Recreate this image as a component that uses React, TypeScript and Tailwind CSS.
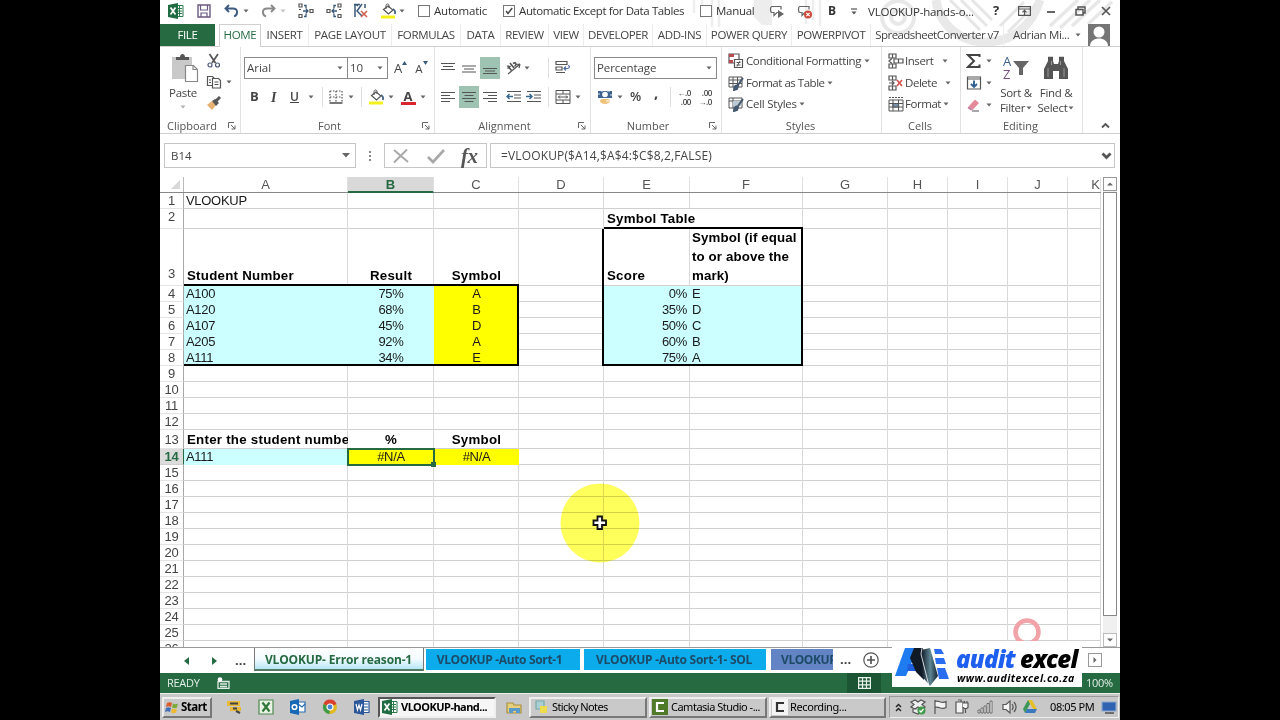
import type { ReactNode } from 'react';
import { clsx } from 'clsx';

const UI = "font-['Open_Sans','Noto_Sans',sans-serif]";

/* ---------- small shared pieces ---------- */

function Caret({ className }: { className?: string }) {
  return (
    <svg className={clsx('shrink-0', className)} width="6" height="4" viewBox="0 0 6 4">
      <path d="M0.5 0.5h5L3 3.5z" fill="#666" />
    </svg>
  );
}

function Icon({ w = 16, h = 16, children, className }: { w?: number; h?: number; children: ReactNode; className?: string }) {
  return (
    <svg className={clsx('shrink-0', className)} width={w} height={h} viewBox={`0 0 ${w} ${h}`} fill="none" stroke="#555" strokeWidth="1.2">
      {children}
    </svg>
  );
}

function Checkbox({ checked }: { checked?: boolean }) {
  return (
    <div className="flex h-3 w-3 shrink-0 items-center justify-center border border-[#777] bg-white">
      {checked && (
        <Icon w={8} h={8}>
          <path d="M1 4l2 2.500L7.200 1" stroke="#444" strokeWidth="1.400" />
        </Icon>
      )}
    </div>
  );
}

function ExcelIcon() {
  return (
    <Icon>
      <path d="M8 2.500h7v11H8z" fill="#fff" stroke="#2b7a4b" strokeWidth="1" />
      <path d="M9 5.500h5M9 8h5M9 10.500h5M11.500 3v10" stroke="#2b7a4b" strokeWidth="1" />
      <path d="M0 2l10-2v16L0 14z" fill="#1f6b42" stroke="none" />
      <path d="M2.500 4.500l5 7M7.500 4.500l-5 7" stroke="#fff" strokeWidth="1.700" />
    </Icon>
  );
}

function BucketIcon({ className }: { className?: string }) {
  return (
    <Icon w={17} h={16} className={className}>
      <path d="M3.500 6.500l4.500-3.500 5 4-4.500 4z" fill="#fff" />
      <path d="M6 6V2.500c0-2 3-2 3 0V5" strokeWidth="1" />
      <path d="M13 6c2 1 2.500 3 1.800 5" stroke="#4a6484" strokeWidth="1.800" />
      <path d="M1 12.500h14v3H1z" fill="#f4f01c" stroke="none" />
    </Icon>
  );
}

/* ---------- title bar ---------- */

function UndoIcon({ flip }: { flip?: boolean }) {
  return (
    <Icon w={15} h={14} className={flip ? '-scale-x-100' : ''}>
      <path d="M5 1L1.500 4.500 5 8M2 4.500h7c5 0 5.500 6 1 8" stroke={flip ? '#8a8a8a' : '#3f5a80'} strokeWidth="1.900" />
    </Icon>
  );
}

function TraceIcon({ kind }: { kind: 'from' | 'to' | 'clear' }) {
  if (kind === 'clear') {
    return (
      <Icon>
        <path d="M1 1.500h6M2 1v13M5 3l-3-2M9 1l-5 7 5 5M12 1v4" stroke="#3a5a7a" strokeWidth="1.500" />
        <path d="M8 8l6 6M14 8l-6 6" stroke="#d06050" strokeWidth="1.600" />
      </Icon>
    );
  }
  return (
    <Icon className={kind === 'to' ? '-scale-x-100' : ''}>
      <path d="M1 1h3v3H1zM1 11.500h3v3H1zM12 6.500h3v3h-3zM1 6.500h2" />
      <path d="M6 2.500h2v3M6 13.500h2v-3M5 8h5M8 6l2 2-2 2" stroke="#3a5a7a" strokeWidth="1.300" />
    </Icon>
  );
}

function TitleBar() {
  return (
    <div className="relative flex h-[22px] shrink-0 items-center text-[11.500px] text-[#333]">
      <div className="ml-2 w-[29px]"><ExcelIcon /></div>
      <div className="w-[27px]">
        <Icon w={14} h={14}>
          <path d="M1 1h12v12H1z" stroke="#6a5a80" strokeWidth="1.400" />
          <path d="M3.500 1v5h7V1M4 13V9h6v4" stroke="#6a5a80" />
        </Icon>
      </div>
      <div className="flex w-[37px] items-center gap-1"><UndoIcon /><Caret /></div>
      <div className="flex w-[37px] items-center gap-1"><UndoIcon flip /><Caret className="opacity-40" /></div>
      <div className="w-7"><TraceIcon kind="from" /></div>
      <div className="w-[27px]"><TraceIcon kind="to" /></div>
      <div className="w-[27px]"><TraceIcon kind="clear" /></div>
      <div className="flex w-[38px] items-center gap-0.5"><BucketIcon /><Caret /></div>
      <div className="flex w-[85px] items-center gap-1 tracking-[-0.200px]"><Checkbox />Automatic</div>
      <div className="flex w-[197px] items-center gap-1 whitespace-nowrap tracking-[-0.390px]"><Checkbox checked />Automatic Except for Data Tables</div>
      <div className="flex w-[69px] items-center gap-1 tracking-[-0.300px]"><Checkbox />Manual</div>
      <div className="w-7">
        <Icon>
          <path d="M3 3.500c-2 0-2 6 0 6h2v3l3-3h2M3 3.500h9v3" stroke="#666" />
          <path d="M9 7l6 4-6 4z" fill="#666" stroke="none" />
        </Icon>
      </div>
      <div className="w-[31px]">
        <Icon>
          <path d="M3 3.500c-2 0-2 6 0 6h2v3l3-3M3 3.500h9v3" stroke="#666" />
          <circle cx="11" cy="11.500" r="4" fill="#cf4a3c" stroke="none" />
          <path d="M9.300 9.800l3.400 3.400M12.700 9.800l-3.400 3.400" stroke="#fff" />
        </Icon>
      </div>
      <div className="w-[23px] text-[12px] font-bold">B</div>
      <div className="w-[17px]">
        <Icon w={6} h={7}><path d="M0 1h6" /><path d="M0.500 3.500h5L3 6.500z" fill="#555" stroke="none" /></Icon>
      </div>
      <div className="w-[125px] whitespace-nowrap pt-0.5 text-[11.500px] tracking-[-0.200px]">VLOOKUP-hands-o...</div>
      <div className="w-[25px] text-[13px] font-bold">?</div>
      <div className="w-7">
        <Icon w={13} h={10}><path d="M0.600 0.600h11.800v8.800H0.600zM0.600 3h11.800M6.500 9V4.500M4.500 6.300l2-2 2 2" /></Icon>
      </div>
      <div className="w-[29px]"><Icon w={10} h={10}><path d="M1 6h8" strokeWidth="1.800" /></Icon></div>
      <div className="w-[26px]"><Icon w={11} h={10}><path d="M3 3V1h7v6H8M1 3.500h7V9H1z" strokeWidth="1.500" /></Icon></div>
      <Icon w={10} h={10}><path d="M1 1l8 8M9 1L1 9" strokeWidth="1.700" /></Icon>
    </div>
  );
}

/* faint artwork behind the window title */
function HeaderArt() {
  return (
    <svg className="absolute right-0 top-0" width="430" height="46" viewBox="690 0 430 46" fill="none" stroke="#e6e6e6">
      <path d="M694 0v13M702 0v18M712 0v27M719 0v27M806 0v24M813 0v20M820 0v26" strokeWidth="2.500" stroke="#eee" />
      <path d="M754 0h18v25h-10l-8-8z" fill="#ededed" stroke="none" />
      <circle cx="898" cy="17" r="16" strokeWidth="4" stroke="#e8e8e8" />
      <circle cx="898" cy="17" r="7" strokeWidth="4" stroke="#e8e8e8" />
      <path d="M936 0c4 26 24 42 50 42s46-16 54-42" strokeWidth="9" stroke="#e9e9e9" />
      <path d="M950 0l30 30M961 0l26 26M972 0l20 20M1000 26L1024 2M1008 32l28-28" strokeWidth="3" />
      <path d="M1050 26L1078 0M1060 28L1090 0M1072 26L1100 0M1088 24L1112 2" strokeWidth="3.500" stroke="#e8e8e8" />
    </svg>
  );
}

const tabs = [
  { label: 'HOME', cls: 'w-[42px]', active: true },
  { label: 'INSERT', cls: 'w-[48px]' },
  { label: 'PAGE LAYOUT', cls: 'w-[83px]' },
  { label: 'FORMULAS', cls: 'w-[69px]' },
  { label: 'DATA', cls: 'w-[40px]' },
  { label: 'REVIEW', cls: 'w-[48px]' },
  { label: 'VIEW', cls: 'w-[35px]' },
  { label: 'DEVELOPER', cls: 'w-[69px]' },
  { label: 'ADD-INS', cls: 'w-[54px]' },
  { label: 'POWER QUERY', cls: 'w-[85px]' },
  { label: 'POWERPIVOT', cls: 'w-[79px]' },
  { label: 'SpreadsheetConverter v7', cls: 'w-[133px] tracking-[-0.550px]' },
];

function RibbonTabs() {
  return (
    <div className="relative flex h-[25px] shrink-0 border-b border-[#d0d0d0] pt-0.5 text-[11.500px] tracking-[-0.350px] text-[#444]">
      <div className="mr-1 flex w-[55px] items-center justify-center bg-[#266a42] text-white">FILE</div>
      {tabs.map((t) => (
        <div
          key={t.label}
          className={clsx(
            'flex shrink-0 items-center justify-center whitespace-nowrap',
            t.cls,
            t.active ? '-mb-px border border-b-0 border-[#d0d0d0] bg-white pb-0.5 text-[#266a42]' : 'border-r border-[#ececec]',
          )}
        >
          {t.label}
        </div>
      ))}
      <div className="ml-[9px] flex w-[62px] items-center whitespace-nowrap">Adrian Mi...</div>
      <div className="flex w-[13px] items-center"><Caret /></div>
      <svg width="22" height="22" viewBox="0 0 22 22">
        <path d="M0 0h22v22H0z" fill="#757575" />
        <circle cx="11" cy="8" r="5.500" fill="#fff" />
        <path d="M2 22c0-10 18-10 18 0z" fill="#fff" />
      </svg>
    </div>
  );
}

/* ---------- ribbon ---------- */

function Launcher({ className }: { className?: string }) {
  return (
    <Icon w={8} h={8} className={className}>
      <path d="M0.500 6V0.500H6M3 3l4 4M7 3.500V7H3.500" stroke="#666" strokeWidth="1" />
    </Icon>
  );
}

function Group({ label, cls, launcher, children }: { label: string; cls: string; launcher?: boolean; children: ReactNode }) {
  return (
    <div className={clsx('flex shrink-0 flex-col', cls)}>
      <div className="flex h-[72px] border-r border-[#e2e2e2]">{children}</div>
      <div className="flex h-[14px] items-center border-r border-[#e2e2e2] text-[11px] text-[#555]">
        <span className={clsx('flex-1 text-center', launcher ? 'pr-2' : 'pr-0.5')}>{label}</span>
        {launcher && <Launcher className="-ml-1 mr-1" />}
      </div>
    </div>
  );
}

function Lines({ rows, on }: { rows: string; on?: boolean }) {
  return (
    <div className={clsx('flex h-[22px] w-[20px] shrink-0 items-center justify-center', on && 'bg-[#9fc3b3]')}>
      <Icon w={14} h={14}><path d={rows} stroke="#555" strokeWidth="1.200" /></Icon>
    </div>
  );
}

function Sep() {
  return <div className="h-5 w-px shrink-0 bg-[#dedede]" />;
}

function ClipboardGroup() {
  return (
    <Group label="Clipboard" cls="w-[81px]" launcher>
      <div className="flex w-[46px] flex-col items-center pt-1.5">
        <Icon w={28} h={30} className="ml-1">
          <path d="M1 4h20v22H1z" fill="#c9c9c9" stroke="none" />
          <path d="M5 7V4h4c0-4 5-4 5 0h4v3z" fill="#555" stroke="none" />
          <path d="M14.500 12.500h8l4 4v12h-12z" fill="#fff" stroke="#888" />
          <path d="M22 12.500v4h4.500" stroke="#888" />
        </Icon>
        <span className="mt-0.5 text-[11.500px] leading-4 tracking-[-0.300px]">Paste</span>
        <Caret className="mt-1 opacity-50" />
      </div>
      <div className="flex flex-1 flex-col gap-[5px] pt-1.5">
        <Icon><path d="M3.500 1l6 9M12 1L6 10" strokeWidth="1.700" /><circle cx="4" cy="12" r="2" stroke="#4a5a74" /><circle cx="11.500" cy="12" r="2" stroke="#4a5a74" /></Icon>
        <div className="flex items-center gap-1.5">
          <Icon><path d="M1.500 2.500h5l2 2v7h-7z" /><path d="M6.500 4.500h6l2 2v7.500h-8z" fill="#fff" /><path d="M8.500 8h4M8.500 10.500h4M3 6h2M3 8.500h2" strokeWidth="1" /></Icon>
          <Caret className="-ml-0.5" />
        </div>
        <Icon><path d="M1 10l5-4 4 4-4 5z" fill="#e6b070" stroke="none" /><path d="M6 6l3-2 4 4-3 3z" fill="#555" stroke="none" /><path d="M10 6l4-4" strokeWidth="3" /></Icon>
      </div>
    </Group>
  );
}

function FontGroup() {
  return (
    <Group label="Font" cls="w-[194px]" launcher>
      <div className="flex flex-col pt-2.5">
        <div className="ml-[3px] flex items-center">
          <div className="flex h-[22px] w-[104px] items-center justify-between border border-[#8a8a8a] bg-white px-0.5 pr-1 text-[11.500px]">Arial<Caret /></div>
          <div className="-ml-px flex h-[22px] w-[41px] items-center justify-between border border-[#8a8a8a] bg-white px-0.5 pr-1 text-[11.500px]">10<Caret /></div>
          <span className="ml-1.5 text-[13px] leading-5">A</span>
          <Icon w={5} h={4} className="-mt-2.5"><path d="M0 4l2.500-4L5 4z" fill="#3a5a7a" stroke="none" /></Icon>
          <span className="ml-2 pt-0.5 text-[11.500px] leading-5">A</span>
          <Icon w={5} h={4} className="-mt-2.5"><path d="M0 0h5L2.500 4z" fill="#3a5a7a" stroke="none" /></Icon>
        </div>
        <div className="mt-1.5 flex h-6 items-center">
          <span className="ml-[9px] w-[21px] text-[13px] font-bold">B</span>
          <span className="w-[19px] font-['Liberation_Serif',serif] text-[14px] font-bold italic">I</span>
          <span className="w-[18px] text-[12px] font-semibold underline">U</span>
          <Caret />
          <div className="w-2" />
          <Sep />
          <Icon w={14} h={14} className="ml-1.5">
            <path d="M1 1h12M1 1v12M13 1v12M7 1v12M1 7h12" strokeDasharray="1.500 1.500" /><path d="M0.500 13h13" strokeWidth="1.600" />
          </Icon>
          <Caret className="ml-[5px]" />
          <div className="w-[7px]" />
          <Sep />
          <BucketIcon className="ml-[6px]" />
          <Caret className="ml-[3px] mr-1.5" />
          <div className="flex w-4 flex-col items-center">
            <span className="text-[13px] font-bold leading-3">A</span>
            <div className="h-[3px] w-[15px] bg-[#d8262c]" />
          </div>
          <Caret className="ml-[4px]" />
        </div>
      </div>
    </Group>
  );
}

function AlignmentGroup() {
  return (
    <Group label="Alignment" cls="w-[156px]" launcher>
      <div className="flex flex-col pl-[3px] pt-2.5">
        <div className="flex items-center">
          <Lines rows="M0 2.500h14M2 5.500h10M0 8.500h14" />
          <div className="w-px" />
          <Lines rows="M0 5h14M2 8h10M0 11h14" />
          <div className="w-px" />
          <Lines rows="M0 7.500h14M2 10h10M0 12.500h14" on />
          <Icon className="ml-1.5"><path d="M2 14L14 4M14 4l-4 .5M14 4l-1 4" /><path d="M1.500 5.500l4 5M4 3l4 5M1.500 8.500l3-2.500M7 3.500c3-2 4 1 1.500 3" strokeWidth="1.600" /></Icon>
          <Caret className="ml-0.5 mr-[18px]" />
          <Sep />
          <Icon className="ml-1.5"><path d="M1 1.500h11v3H1zM1 7h6v3H1zM1 12.500h9" /><path d="M9 8.500h3c3 0 3-3 1-3M11 6.500l-2 2 2 2" stroke="#4a6aa0" /></Icon>
        </div>
        <div className="mt-[7px] flex items-center">
          <Lines rows="M0 2.500h14M0 5.500h9M0 8.500h14M0 11.500h9" />
          <div className="w-px" />
          <Lines rows="M0 2.500h14M2.500 5.500h9M0 8.500h14M2.500 11.500h9" on />
          <div className="w-px" />
          <Lines rows="M0 2.500h14M5 5.500h9M0 8.500h14M5 11.500h9" />
          <Icon className="ml-1.5"><path d="M1 2.500h14M8 6h7M8 9h7M1 12.500h14" /><path d="M7 7.500H1M3.500 5L1 7.500 3.500 10" stroke="#3a6a90" strokeWidth="1.500" /></Icon>
          <Icon className="ml-1"><path d="M1 2.500h14M8 6h7M8 9h7M1 12.500h14" /><path d="M0 7.500h6M3.500 5L6 7.500 3.500 10" stroke="#3a6a90" strokeWidth="1.500" /></Icon>
          <div className="w-[6px]" />
          <Sep />
          <Icon className="ml-1.5"><path d="M1 1.500h14v13H1zM1 5h14M1 11h14M8 1.500V5M8 11v3.500M3 8h10M5 6.500L3.500 8 5 9.500M11 6.500L12.500 8 11 9.500" strokeWidth="1" /></Icon>
          <Caret className="ml-1" />
        </div>
      </div>
    </Group>
  );
}

function DecimalIcon({ left }: { left?: boolean }) {
  return (
    <div className="flex w-[15px] flex-col text-right text-[8px] font-semibold leading-[9px] tracking-tighter">
      <span>{left ? '←.0' : '.00'}</span>
      <span>{left ? '.00' : '→.0'}</span>
    </div>
  );
}

function NumberGroup() {
  return (
    <Group label="Number" cls="w-[131px]" launcher>
      <div className="flex flex-col pl-[3px] pt-2.5">
        <div className="flex h-[22px] w-[123px] items-center justify-between border border-[#8a8a8a] bg-white pl-0.5 pr-1 text-[11.500px] tracking-[-0.100px]">Percentage<Caret /></div>
        <div className="mt-1.5 flex h-6 items-center">
          <Icon className="ml-[3px]"><path d="M1 2h14v7H1z" fill="#3f6390" stroke="none" /><circle cx="8" cy="5.500" r="2.800" fill="#fff" stroke="none" /><path d="M4 2h2M10 2h3M1 5h2M13 6h2" stroke="#dbe6f2" /><ellipse cx="8" cy="12" rx="5" ry="3" fill="#efc27a" stroke="none" /><path d="M3 9.500h8M9 12h5" stroke="#fff" /></Icon>
          <Caret className="ml-1" />
          <span className="ml-[7px] w-[24px] text-[13px] font-semibold">%</span>
          <span className="-mt-2.5 w-[16px] text-[15px] font-bold leading-3">,</span>
          <Sep />
          <div className="w-[5px]" />
          <DecimalIcon left />
          <div className="w-1.5" />
          <DecimalIcon />
        </div>
      </div>
    </Group>
  );
}

function StylesGroup() {
  return (
    <Group label="Styles" cls="w-[160px]">
      <div className="flex flex-col gap-[5.500px] pl-1.5 pt-1.5 text-[11.500px] leading-4">
        <div className="flex items-center gap-0.5 whitespace-nowrap">
          <Icon><path d="M1 1h10v9H1z" /><path d="M1 1h5v3H1zM1 7h4v3H1z" fill="#b84a52" stroke="none" /><path d="M6.500 6.500h8v8h-8z" fill="#fff" /><path d="M8.500 9.500h4M8.500 12h4M12 8l-3 5.500" strokeWidth="1" /></Icon>
          <span className="mr-px tracking-[-0.380px]">Conditional Formatting</span><Caret />
        </div>
        <div className="flex items-center gap-0.5 whitespace-nowrap">
          <Icon><path d="M1 2h13v10H1zM1 5h13M1 8.500h13M5 2v10M9.500 2v10" strokeWidth="1" /><path d="M6 15c0-4 2-5 4-4l-1 3zM10 10l5-7" fill="#3f6390" stroke="#44586e" strokeWidth="2" /></Icon>
          <span className="tracking-[-0.470px]">Format as Table</span><Caret />
        </div>
        <div className="flex items-center gap-0.5 whitespace-nowrap">
          <Icon><path d="M1 2h13v10H1zM1 5h13M5 2v10" strokeWidth="1" /><path d="M5 5h8v5H5z" fill="#bccbd6" stroke="none" /><path d="M6 15c0-4 2-5 4-4l-1 3zM10 10l5-7" fill="#3f6390" stroke="#44586e" strokeWidth="2" /></Icon>
          <span className="tracking-[-0.250px]">Cell Styles</span><Caret />
        </div>
      </div>
    </Group>
  );
}

function CellsGroup() {
  return (
    <Group label="Cells" cls="w-[79px]">
      <div className="flex flex-col gap-[5.500px] pl-1.5 pt-1.5 text-[11.500px] leading-4 tracking-[-0.450px]">
        <div className="flex items-center">
          <Icon><path d="M1 1h7v4H1zM4.500 1v4M1 11h7v4H1zM4.500 11v4" /><path d="M6 6h9v4H6zM10.500 6v4M4 5.500L1 8l3 2.500" /></Icon>
          <span className="w-[37px] pl-px">Insert</span><Caret className="ml-px" />
        </div>
        <div className="flex items-center">
          <Icon><path d="M1 1h7v4H1zM4.500 1v4M1 11h7v4H1zM4.500 11v4M1 8h5M4 6l2 2-2 2" /><path d="M9 5l5 6M14 5l-5 6" stroke="#d4504a" strokeWidth="1.600" /></Icon>
          <span className="w-[40px] pl-px">Delete</span><Caret className="ml-px" />
        </div>
        <div className="flex items-center">
          <Icon><path d="M1 1.500h14" strokeDasharray="2 1" /><path d="M1 4h14v11H1zM1 7.500h14M1 11h14M5 4v11M10.500 4v11" strokeWidth="1" /><path d="M5 7.500h5.500V11H5z" fill="#7a95b0" /></Icon>
          <span className="w-[39px] pl-px">Format</span><Caret />
        </div>
      </div>
    </Group>
  );
}

function EditingGroup() {
  return (
    <Group label="Editing" cls="w-[122px]">
      <div className="flex w-[35px] flex-col gap-1.5 pl-[5px] pt-1.5">
        <div className="flex items-center gap-1">
          <Icon><path d="M13.500 4V2H2l6 6-6 6h11.500v-2.500" stroke="#444" strokeWidth="2" /></Icon><Caret />
        </div>
        <div className="flex items-center gap-1">
          <Icon><path d="M1.500 2h13v12h-13zM1.500 4h13" /><path d="M8 5.500v6M5 9l3 3 3-3" stroke="#2f5f8f" strokeWidth="1.900" /></Icon><Caret />
        </div>
        <div className="flex items-center gap-1">
          <Icon><path d="M3 9l6-6.500 4 3.500-6 6.500z" fill="#e58a98" stroke="none" /><path d="M3 9l4 3.500-2 1-3.500-2.500z" fill="#c87fa0" stroke="none" /><path d="M6 14h7" strokeWidth="1" /></Icon><Caret />
        </div>
      </div>
      <div className="flex w-[40px] flex-col items-center pt-2 text-[11.500px] leading-[15px] tracking-[-0.300px]">
        <div className="flex items-center">
          <div className="flex flex-col text-[13px] leading-[13px]">
            <span className="text-[#3f6390]">A</span>
            <span className="text-[#7a4a80]">Z</span>
          </div>
          <Icon w={16} h={16} className="ml-0.5"><path d="M0 1h16l-6 7v7H6V8z" fill="#666" stroke="none" /></Icon>
        </div>
        <span className="mt-1 whitespace-nowrap">Sort &amp;</span>
        <span className="flex items-center gap-px">Filter<Caret /></span>
      </div>
      <div className="flex w-[40px] flex-col items-center pt-2 text-[11.500px] leading-[15px] tracking-[-0.300px]">
        <Icon w={26} h={26}>
          <path d="M1 24V14l4-8V3h5v3l1 3h4l1-3V3h5v3l4 8v10h-9v-8h-6v8z" fill="#555" stroke="none" />
          <path d="M5 2.500h5M16 2.500h5" stroke="#555" strokeWidth="1.500" />
          <path d="M5 13v9M21 13v9M8.500 6v4M17.500 6v4" stroke="#999" strokeWidth="1" />
        </Icon>
        <span className="mt-1 whitespace-nowrap">Find &amp;</span>
        <span className="flex items-center gap-px">Select<Caret /></span>
      </div>
    </Group>
  );
}

function Ribbon() {
  return (
    <div className="flex h-[87px] shrink-0 border-b border-[#cfcfcf] text-[#444]">
      <ClipboardGroup />
      <FontGroup />
      <AlignmentGroup />
      <NumberGroup />
      <StylesGroup />
      <CellsGroup />
      <EditingGroup />
      <div className="flex flex-1 items-end justify-end pb-1 pr-2.5">
        <Icon w={9} h={7}><path d="M1 5.500L4.500 2 8 5.500" strokeWidth="1.800" /></Icon>
      </div>
    </div>
  );
}

/* ---------- formula bar ---------- */

function FormulaBar() {
  return (
    <div className="flex h-[43px] shrink-0 pt-[9px] text-[#444]">
      <div className="ml-1 flex h-[25px] w-[192px] items-center justify-between border border-[#c6c6c6] px-1.5 text-[11.500px]">
        B14
        <Icon w={8} h={5} className="-mr-px"><path d="M0 0h8L4 4.500z" fill="#666" stroke="none" /></Icon>
      </div>
      <div className="flex h-[25px] w-7 flex-col items-center justify-center gap-0.5">
        <i className="h-0.5 w-0.5 bg-[#888]" /><i className="h-0.5 w-0.5 bg-[#888]" /><i className="h-0.5 w-0.5 bg-[#888]" />
      </div>
      <div className="flex h-[25px] w-[103px] items-center border border-[#c6c6c6] pl-2">
        <Icon><path d="M1 2l14 12M14 1.500L1 14.500" stroke="#a8a8a8" strokeWidth="1.900" /></Icon>
        <Icon w={18} className="ml-[18px]"><path d="M1 9l5 5L17 2" stroke="#a8a8a8" strokeWidth="2.600" /></Icon>
        <span className="ml-4 font-['Liberation_Serif',serif] text-[21px] font-bold italic leading-5 tracking-[-0.500px] text-[#555]">fx</span>
      </div>
      <div className="ml-[3px] flex h-[25px] w-[625px] items-center justify-between border border-[#c6c6c6] pl-2.5 pr-0.5 text-[12px] tracking-[0.140px]">
        =VLOOKUP($A14,$A$4:$C$8,2,FALSE)
        <Icon w={11} h={8}><path d="M1.500 1.500l4 4 4-4" strokeWidth="2.800" /></Icon>
      </div>
    </div>
  );
}

/* ---------- sheet ---------- */

const columns = [
  { name: 'A', cls: 'w-[164px]' },
  { name: 'B', cls: 'w-[86px]' },
  { name: 'C', cls: 'w-[85px]' },
  { name: 'D', cls: 'w-[85px]' },
  { name: 'E', cls: 'w-[86px]' },
  { name: 'F', cls: 'w-[113px]' },
  { name: 'G', cls: 'w-[85px]' },
  { name: 'H', cls: 'w-[60px]' },
  { name: 'I', cls: 'w-[60px]' },
  { name: 'J', cls: 'w-[60px]' },
  { name: 'K', cls: 'w-[33px]' },
];

const values: Record<string, string> = {
  A1: 'VLOOKUP', E2: 'Symbol Table',
  A3: 'Student Number', B3: 'Result', C3: 'Symbol', E3: 'Score', F3: 'Symbol (if equal to or above the mark)',
  A4: 'A100', B4: '75%', C4: 'A', E4: '0%', F4: 'E',
  A5: 'A120', B5: '68%', C5: 'B', E5: '35%', F5: 'D',
  A6: 'A107', B6: '45%', C6: 'D', E6: '50%', F6: 'C',
  A7: 'A205', B7: '92%', C7: 'A', E7: '60%', F7: 'B',
  A8: 'A111', B8: '34%', C8: 'E', E8: '75%', F8: 'A',
  A13: 'Enter the student number', B13: '%', C13: 'Symbol',
  A14: 'A111', B14: '#N/A', C14: '#N/A',
};

// cell edges as inset shadows, keyed by right edge then bottom edge
const edges: Record<string, string> = {
  'grid-grid': 'shadow-[inset_-1px_0_0_#d9d9d9,inset_0_-1px_0_#d0d0d0]',
  'grid-thick': 'shadow-[inset_0_-2px_0_#000,inset_-1px_0_0_#d9d9d9]',
  'none-grid': 'shadow-[inset_0_-1px_0_#d0d0d0]',
  'none-thick': 'shadow-[inset_0_-2px_0_#000]',
  'none-none': '',
  'thick-grid': 'shadow-[inset_-2px_0_0_#000,inset_0_-1px_0_#d0d0d0]',
  'thick-none': 'shadow-[inset_-2px_0_0_#000]',
  'thick-thick': 'shadow-[inset_-2px_0_0_#000,inset_0_-2px_0_#000]',
};

function rowHeight(row: number) {
  if (row === 2) {return 'h-[20px]';}
  if (row === 3) {return 'h-[57px]';}
  if (row === 13) {return 'h-[19px]';}
  return 'h-[16px]';
}

function cellClass(col: string, row: number) {
  const data = row >= 4 && row <= 8;
  const cyan = (data && 'ABEF'.includes(col)) || (row === 14 && col === 'A');
  const yellow = (data && col === 'C') || (row === 14 && 'BC'.includes(col));
  const bold = [2, 3, 13].includes(row);
  const filled = cyan || yellow;

  let right = filled || (col === 'E' && row === 2) ? 'none' : 'grid';
  if ((col === 'C' && data) || ('DF'.includes(col) && row >= 3 && row <= 8)) {right = 'thick';}

  let bottom = filled ? 'none' : 'grid';
  if (('ABC'.includes(col) && (row === 3 || row === 8)) || ('EF'.includes(col) && (row === 2 || row === 8))) {
    bottom = 'thick';
  }

  const centered = 'BC'.includes(col);
  const percent = col === 'E' && data;
  const wrapped = col === 'F' && row === 3;

  return clsx(
    'flex shrink-0 items-end',
    edges[`${right}-${bottom}`],
    centered && 'justify-center',
    percent && 'justify-end pr-[3px]',
    !centered && !percent && (bold && col !== 'F' ? 'pl-[3px]' : 'pl-0.5'),
    cyan && 'bg-[#ccffff]',
    yellow && 'bg-[#ffff00]',
    bold ? 'text-[13.300px] font-bold leading-[19px] text-black' : 'pb-px leading-[15px] tracking-[-0.300px]',
    bold && (wrapped ? 'tracking-[0.120px]' : 'tracking-[0.250px]'),
    (row === 2 || row === 3) && 'pb-px',
    !wrapped && 'whitespace-nowrap',
    col === 'A' && 'overflow-hidden',
  );
}

function SheetRow({ row }: { row: number }) {
  const active = row === 14;
  return (
    <div className={clsx('flex shrink-0', rowHeight(row))}>
      <div
        className={clsx(
          'flex w-6 shrink-0 items-end justify-center border-b border-r tracking-[-0.200px]',
          [2, 3].includes(row) && 'leading-[18px]',
          row === 13 ? 'leading-[17px]' : 'leading-[15px]',
          active ? 'border-b-[#d0d0d0] border-r-[#266a42] bg-[#dcdcdc] font-semibold text-[#266a42]' : 'border-b-[#e4e4e4] border-r-[#a8a8a8] text-[#444]',
          [2, 3].includes(row) && 'pb-0.5',
        )}
      >
        {row}
      </div>
      {columns.map((c) => (
        <div key={c.name} className={clsx(c.cls, cellClass(c.name, row), active && c.name === 'B' && 'relative')}>
          {values[`${c.name}${row}`]}
          {active && c.name === 'B' && (
            <div className="absolute -bottom-px -left-px -right-px -top-px border-2 border-[#266a42]">
              <div className="absolute -bottom-[3px] -right-[3px] h-[5px] w-[5px] bg-[#266a42]" />
            </div>
          )}
        </div>
      ))}
    </div>
  );
}

function ScrollButton({ d, className }: { d: string; className?: string }) {
  return (
    <div className={clsx('flex h-[14px] w-[14px] shrink-0 items-center justify-center border bg-white', className)}>
      <Icon w={6} h={6}><path d={d} fill="#666" stroke="none" /></Icon>
    </div>
  );
}

function Sheet() {
  return (
    <div className="relative flex h-[470px] shrink-0 font-['Liberation_Sans',Arial,sans-serif] text-[13px] text-[#1a1a1a]">
      <div className="flex w-[941px] flex-col overflow-hidden">
        <div className="flex h-4 shrink-0 border-b border-[#888] text-[#555]">
          <div className="flex w-6 items-end justify-end border-r border-[#bbb] p-[3px]">
            <Icon w={9} h={9}><path d="M9 0v9H0z" fill="#d8d8d8" stroke="none" /></Icon>
          </div>
          {columns.map((c) => (
            <div
              key={c.name}
              className={clsx(
                'flex shrink-0 items-center border-r border-[#e0e0e0]',
                c.cls,
                c.name === 'K' ? 'justify-end' : 'justify-center',
                c.name === 'B' && '-mb-px border-b-2 border-b-[#266a42] bg-[#d9d9d9] pt-px font-bold text-[#266a42]',
              )}
            >
              {c.name}
            </div>
          ))}
        </div>
        {Array.from({ length: 26 }, (_, i) => <SheetRow key={i} row={i + 1} />)}
      </div>
      <div className="ml-0.5 flex w-[14px] flex-col bg-[#f0f0f0]">
        <ScrollButton d="M0 4.500h6L3 1.500z" className="border-[#999]" />
        <div className="mt-px h-[424px] border border-[#888] bg-white" />
        <div className="flex-1" />
        <ScrollButton d="M0 1.500h6L3 4.500z" className="border-[#bbb]" />
      </div>

      {/* pointer with its highlight disc */}
      <svg className="absolute left-[400px] top-[306px] mix-blend-multiply" width="80" height="80" viewBox="0 0 80 80">
        <circle cx="40" cy="40" r="39.500" fill="#ffff5c" />
      </svg>
      <svg className="absolute left-[432px] top-[338px]" width="15" height="15" viewBox="0 0 15 15">
        <path d="M5.500 1.500H10v4h4V10h-4v4H5.500v-4h-4V5.500h4z" fill="#fff" stroke="#111" strokeWidth="1.800" />
      </svg>
      {/* click ripple */}
      <svg className="absolute left-[853px] top-[441px]" width="28" height="28" viewBox="0 0 28 28">
        <circle cx="14" cy="14" r="11.500" fill="none" stroke="#f2a3a8" strokeWidth="4.500" />
      </svg>
    </div>
  );
}

/* ---------- sheet tabs and status bar ---------- */

function SheetTabs() {
  return (
    <div className="flex h-[26px] shrink-0 border-t border-[#999] bg-white text-[12px] font-bold text-[#1d4a66]">
      <div className="flex w-[94px] items-center">
        <Icon w={6} h={8} className="ml-6"><path d="M5 0v8L0 4z" fill="#266a42" stroke="none" /></Icon>
        <Icon w={6} h={8} className="ml-[21px]"><path d="M1 0v8l5-4z" fill="#266a42" stroke="none" /></Icon>
        <span className="ml-[18px] text-[13px] text-[#444]">...</span>
      </div>
      <div className="flex h-[23px] w-[170px] items-center justify-center whitespace-nowrap border border-b-2 border-t-0 border-[#777] border-b-[#4f7a62] bg-gradient-to-b from-white via-[#f4fcff] to-[#b5e6f5] pr-px pt-0.5 tracking-[-0.150px] text-[#266a42]">VLOOKUP- Error reason-1</div>
      <div className="ml-0.5 mt-px flex h-[21px] w-[154px] items-center justify-center whitespace-nowrap bg-[#0cabeb] pr-[7px] tracking-[-0.350px]">VLOOKUP -Auto Sort-1</div>
      <div className="ml-1 mt-px flex h-[21px] w-[182px] items-center justify-center whitespace-nowrap bg-[#0cabeb] pr-0.5 tracking-[-0.250px]">VLOOKUP -Auto Sort-1- SOL</div>
      <div className="ml-[5px] mt-px flex h-[21px] w-[62px] items-center overflow-hidden whitespace-nowrap bg-[#6283c4] pl-2.5 tracking-[-0.420px]">VLOOKUP</div>
      <span className="ml-[7px] pt-0.5 text-[13px] text-[#444]">...</span>
      <Icon className="ml-3 mt-1"><circle cx="8" cy="8" r="7.200" /><path d="M8 4v8M4 8h8" strokeWidth="1.700" /></Icon>
      <div className="flex-1" />
      <ScrollButton d="M1.500 0v6l3-3z" className="mr-[18px] mt-[5px] border-[#999]" />
    </div>
  );
}

function StatusBar() {
  return (
    <div className="flex h-5 shrink-0 items-center bg-[#266a42] text-[11px] text-[#e3efe8]">
      <span className="ml-[7px] w-[50px] tracking-[-0.300px]">READY</span>
      <Icon w={13} h={12}><path d="M1 4.500h11v7H1zM3 7h7M3 9.500h7" stroke="#dfeee6" strokeWidth="1.300" /><circle cx="3" cy="2.500" r="2.300" fill="#fff" stroke="none" /></Icon>
      <div className="flex-1" />
      <div className="mr-[205px] flex h-5 w-[34px] items-center justify-center bg-[#1b5534]">
        <Icon w={13} h={12}><path d="M0.600 0.600h11.800v10.800H0.600zM0.600 4.200h11.800M0.600 7.800h11.800M4.500 0.600v10.800M8.500 0.600v10.800" stroke="#e8f2ec" /></Icon>
      </div>
      <span className="mr-2 w-[26px] tracking-[-0.300px]">100%</span>
    </div>
  );
}

function AuditExcelLogo() {
  return (
    <div className="absolute left-[732px] top-[641px] flex h-[46px] w-[190px] bg-white">
      <svg className="shrink-0" width="60" height="46" viewBox="0 0 60 46">
        <defs>
          <linearGradient id="ae" x1="0" x2="1">
            <stop offset="0" stopColor="#0b1220" />
            <stop offset="0.550" stopColor="#5f8794" />
            <stop offset="1" stopColor="#10202c" />
          </linearGradient>
        </defs>
        <path d="M13 7h13L14 35H3z" fill="#1f7bf0" />
        <path d="M16 23h8l2 7H15z" fill="#1f5fe0" />
        <path d="M42 8h7l3 5h-9zM43 17h9l2 6H44zM45 27h8l4 11H47z" fill="#2a6df0" />
        <path d="M22 7h9l1 32-8-8-6-14z" fill="#0f1a26" />
        <path d="M29 9l9-2 8 28-8 10-8-10z" fill="url(#ae)" />
        <path d="M30 7l-1 6 8 32" fill="none" stroke="#fff" strokeWidth="0.800" />
      </svg>
      <div className="flex flex-col pt-[5px]">
        <div className="ml-1 whitespace-nowrap text-[24px] font-extrabold italic leading-[26px] tracking-[-0.750px]">
          <span className="text-[#1f5ff0]">audit</span><span className="ml-[5px] text-black">excel</span>
        </div>
        <div className="ml-[5px] whitespace-nowrap text-[10.500px] font-bold italic leading-[13px] tracking-[0.500px] text-black">www.auditexcel.co.za</div>
      </div>
    </div>
  );
}

/* ---------- taskbar ---------- */

function TaskButton({ icon, label, cls }: { icon: ReactNode; label: string; cls: string }) {
  return (
    <div className={clsx('flex h-[21px] shrink-0 items-center overflow-hidden whitespace-nowrap border-2', cls)}>
      {icon}
      <span>{label}</span>
    </div>
  );
}

const raised = 'border-t-[#eee] border-l-[#eee] border-b-[#777] border-r-[#777] bg-[#c9c9c9]';

function CamtasiaIcon({ light }: { light?: boolean }) {
  return (
    <Icon>
      <path d="M0 0h16v16H0z" fill={light ? '#f4f4f4' : '#4f7a28'} stroke="none" />
      <path d="M12 4H5v8h7" stroke={light ? '#333' : '#fff'} strokeWidth="2.200" />
    </Icon>
  );
}

function Taskbar() {
  return (
    <div className="flex h-[27px] shrink-0 items-center border-t border-[#eee] bg-[#c8c8c8] font-['Noto_Sans','Open_Sans',sans-serif] text-[11px] tracking-[-0.400px] text-black">
      <div className={clsx('ml-0.5 flex h-[21px] w-[50px] items-center gap-px border-2 pl-px font-bold tracking-[-0.500px]', raised)}>
        <Icon w={15} h={15}>
          <path d="M2 3c2-1 4-1 5 0L6 7c-2-1-3-1-5 0z" fill="#dc5a2c" stroke="none" /><path d="M8 3.500c2 1 3 1 5 0l-1 4c-2 1-3 1-5 0z" fill="#7cab3c" stroke="none" />
          <path d="M1 8c2-1 3-1 5 0l-1 4c-2-1-3-1-5 0z" fill="#3f70b8" stroke="none" /><path d="M7 8.500c2 1 3 1 5 0l-1 4c-2 1-3 1-5 0z" fill="#edb92e" stroke="none" />
        </Icon>
        <span className="text-[11.500px]">Start</span>
      </div>
      <Icon className="ml-[14px]"><path d="M1 2h13v5H1zM4 8h11v4H4z" fill="#e9b93a" stroke="none" /><path d="M4 4.500h8M7 9.500h4M10 12l4 2" stroke="#444" strokeWidth="2" /></Icon>
      <Icon className="ml-4"><path d="M1 1h14v14H1z" fill="#e9f2e4" stroke="#4f8a50" /><path d="M4.500 3.500l7 9M11.500 3.500l-7 9" stroke="#2f7a3a" strokeWidth="2.200" /></Icon>
      <Icon className="ml-4"><path d="M7 3h8v10H7z" fill="#fff" stroke="#2b6cb0" /><path d="M8 5l4 3 3-3" stroke="#2b6cb0" /><path d="M0 2l9-2v16l-9-2z" fill="#1769b5" stroke="none" /><circle cx="4.500" cy="8" r="2.300" stroke="#fff" strokeWidth="1.600" /></Icon>
      <Icon className="ml-4">
        <circle cx="8" cy="8" r="7" fill="#e0b820" stroke="none" /><path d="M8 8L1.500 5A7 7 0 0 1 14.500 5z" fill="#d8402f" stroke="none" /><path d="M8 8L1.500 5a7 7 0 0 0 6 10z" fill="#3f9a4a" stroke="none" />
        <circle cx="8" cy="8" r="3" fill="#4a86d8" stroke="#fff" />
      </Icon>
      <Icon className="ml-4"><path d="M8 2.500h7v11H8zM9 5h5M9 8h5M9 11h5" fill="#fff" stroke="#2b579a" /><path d="M0 2l10-2v16L0 14z" fill="#2b579a" stroke="none" /><path d="M2 5l1.500 6L5 6l1.500 5L8 5" stroke="#fff" /></Icon>
      <TaskButton icon={<ExcelIcon />} label="VLOOKUP-hand..." cls="ml-2 w-[118px] gap-[3px] border-b-[#eee] border-l-[#555] border-r-[#eee] border-t-[#555] bg-[#f6f6f6] pl-0.5 font-bold tracking-[-0.500px]" />
      <Icon className="ml-2.5"><path d="M1 4h6l1 2h7v8H1z" fill="#e5cf7c" stroke="#a99040" /><path d="M3 9h11v5H10v-2H7v2H3z" fill="#5a9ac8" stroke="none" /></Icon>
      <TaskButton icon={<Icon><path d="M2 2h8v8H2z" fill="#a9cfd4" stroke="#7aa" /><path d="M6 7h7v7H6z" fill="#eddc4e" stroke="none" /></Icon>} label="Sticky Notes" cls={clsx('ml-[7px] w-[118px] gap-0.5 pl-[3px] tracking-[-0.600px]', raised)} />
      <TaskButton icon={<CamtasiaIcon />} label="Camtasia Studio -..." cls={clsx('ml-0.5 w-[118px] gap-[3px] pl-px tracking-[-0.500px]', raised)} />
      <TaskButton icon={<CamtasiaIcon light />} label="Recording..." cls={clsx('ml-0.5 w-[117px] gap-0.5 pl-px', raised)} />
      <div className="ml-[3px] flex h-[22px] w-[230px] items-center border border-[#999] border-b-[#eee] border-r-[#eee] pl-[5px]">
        <Icon w={7} h={9}><path d="M1 4l2.500-2.500L6 4M1 8l2.500-2.500L6 8" stroke="#222" strokeWidth="1.400" /></Icon>
        <Icon className="ml-2"><path d="M1 3l4-2 3 2 3-2 4 2-3 2.500 3 2.500-4 2-3-2-3 2-4-2 3-2.500zM3 10v3l5 2 4-2" fill="#eee" stroke="#555" /><circle cx="11.500" cy="11.500" r="4" fill="#3f9a4a" stroke="none" /><path d="M9.500 11.500l1.500 1.500 2.500-3" stroke="#fff" /></Icon>
        <Icon className="ml-1.5"><path d="M3 1v14M3 2.500c4-2 6 3 11 0v6c-5 3-7-2-11 0" fill="#f4f4f4" /></Icon>
        <Icon className="ml-1.5"><path d="M2 3h7v11H2zM4 1h3v2" fill="#f4f4f4" /><path d="M9 4h5v4c0 2-5 2-5 0M11.500 9v5M10.500 2v2M13 2v2" fill="#f4f4f4" /></Icon>
        <Icon className="ml-[7px]"><path d="M1 11h2v3H1zM4 9h2v5H4zM7 7h2v7H7zM10 4.500h2V14h-2zM13 2h2v12h-2z" fill="#f4f4f4" strokeWidth="0.800" /></Icon>
        <Icon className="ml-2"><path d="M2 5.500h3l4-3.500v12L5 10.500H2z" fill="#f4f4f4" /><path d="M11 5c1.500 2 1.500 4 0 6M13 3c2.500 3 2.500 7 0 10" /></Icon>
        <Icon className="ml-[5px]"><path d="M6 1h4l5 9h-4z" fill="#e6c02a" stroke="none" /><path d="M6 1L1 10l2 4 5-9z" fill="#3d9556" stroke="none" /><path d="M3 14l2-4h10l-2 4z" fill="#3a78c0" stroke="none" /></Icon>
        <span className="ml-3 w-[44px] whitespace-nowrap text-[11px]">08:05 PM</span>
        <Icon className="ml-1.5" w={18}><path d="M2 3h14v9H2z" fill="#2f62b0" stroke="#8aa6cf" /><path d="M5 14h9" stroke="#333" /></Icon>
      </div>
    </div>
  );
}

export default function App() {
  return (
    <div className="flex h-[720px] w-[1280px] justify-center overflow-hidden bg-black">
      <div className={clsx('relative flex w-[960px] flex-col overflow-hidden bg-white', UI)}>
        <HeaderArt />
        <TitleBar />
        <RibbonTabs />
        <Ribbon />
        <FormulaBar />
        <Sheet />
        <SheetTabs />
        <StatusBar />
        <Taskbar />
        <AuditExcelLogo />
      </div>
    </div>
  );
}
